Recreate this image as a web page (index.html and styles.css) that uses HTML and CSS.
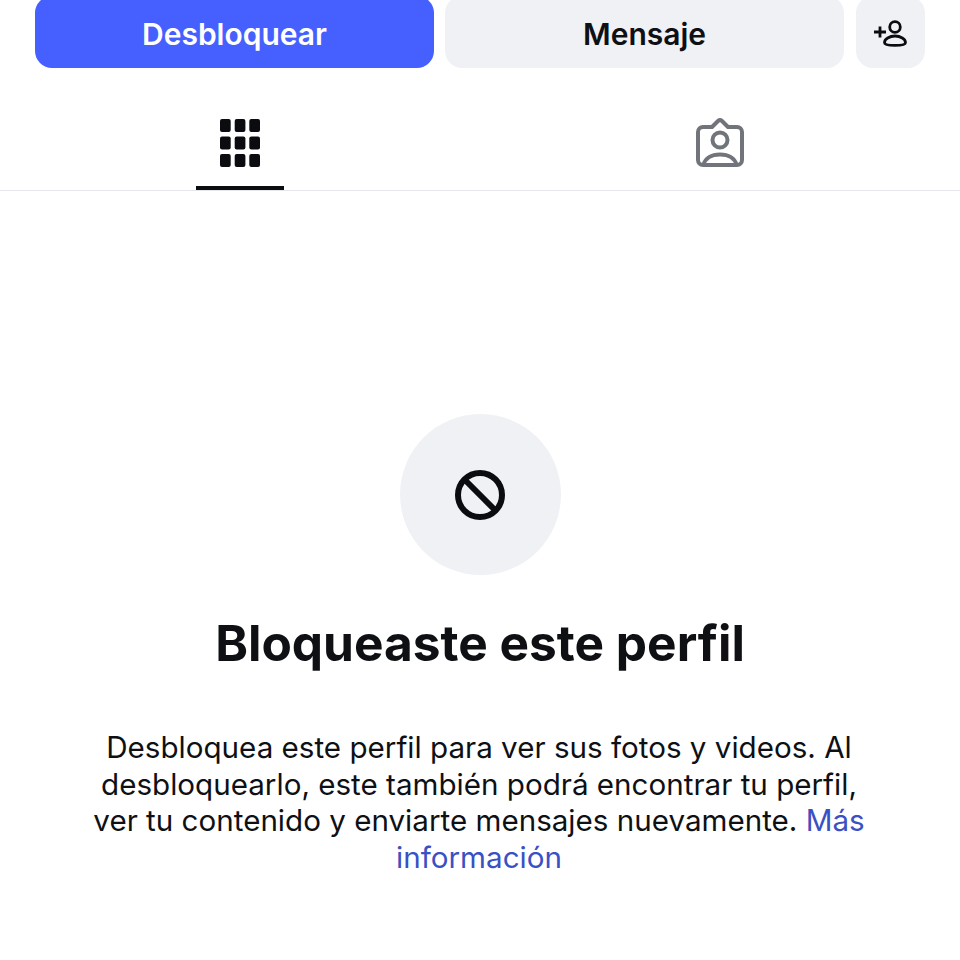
FILE: index.html
```html
<!DOCTYPE html>
<html>
<head>
	<meta charset="UTF-8">
	<title>Perfil bloqueado</title>
	<link rel="stylesheet" href="styles.css">
</head>
<body>
	<div class="actions">
		<button type="button" class="btn btn-primary">Desbloquear</button>
		<button type="button" class="btn btn-grey">Mensaje</button>
		<button type="button" class="btn btn-grey btn-icon">
			<svg width="34" height="28" viewBox="0 0 34 28" fill="none" stroke="#0b0c10" stroke-width="2.800">
				<path d="M0 12h12M6 6.500v11"/>
				<circle cx="21" cy="7" r="5.300"/>
				<path d="M10.500 22.500c0-3.500 5-6.500 10.500-6.500s10.500 3 10.500 6.500c0 2-4.500 2.900-10.500 2.900s-10.500-.9-10.500-2.900z"/>
			</svg>
		</button>
	</div>
	<div class="tabs">
		<div class="tab tab-active">
			<svg class="grid-icon" width="40" height="48" viewBox="0 0 40 48" fill="#0b0c10">
				<rect x="0" y="0" width="10.700" height="13" rx="2"/>
				<rect x="14.700" y="0" width="10.700" height="13" rx="2"/>
				<rect x="29.300" y="0" width="10.700" height="13" rx="2"/>
				<rect x="0" y="17.500" width="10.700" height="13" rx="2"/>
				<rect x="14.700" y="17.500" width="10.700" height="13" rx="2"/>
				<rect x="29.300" y="17.500" width="10.700" height="13" rx="2"/>
				<rect x="0" y="35" width="10.700" height="13" rx="2"/>
				<rect x="14.700" y="35" width="10.700" height="13" rx="2"/>
				<rect x="29.300" y="35" width="10.700" height="13" rx="2"/>
			</svg>
		</div>
		<div class="tab">
			<svg width="48" height="50" viewBox="0 0 48 50" fill="none" stroke="#71747b" stroke-width="4" stroke-linejoin="round">
				<path d="M7 9h9l6-6a3 3 0 0 1 4 0l6 6h9a5 5 0 0 1 5 5v28a5 5 0 0 1-5 5H7a5 5 0 0 1-5-5V14a5 5 0 0 1 5-5z"/>
				<circle cx="24" cy="22" r="7.500"/>
				<path d="M7.500 47c1.500-7 8-10.500 16.500-10.500s15 3.500 16.500 10.500"/>
			</svg>
		</div>
	</div>
	<div class="blocked">
		<div class="blocked-circle">
			<svg width="52" height="52" viewBox="0 0 52 52" fill="none" stroke="#0b0c10" stroke-width="6">
				<circle cx="26" cy="26" r="22"/>
				<path d="M10.500 10.500l31 31"/>
			</svg>
		</div>
		<h1>Bloqueaste este perfil</h1>
		<p>Desbloquea este perfil para ver sus fotos y videos. Al desbloquearlo, este también podrá encontrar tu perfil, ver tu contenido y enviarte mensajes nuevamente. <a href="#">Más información</a></p>
	</div>
</body>
</html>
```

FILE: styles.css
```css
body {
	margin: 0;
	background-color: #fff;
	font-family: "Inter", "Liberation Sans", sans-serif;
	color: #0e1014;
}

.actions {
	display: flex;
	gap: 11px;
	margin-top: -4px;
	padding: 0 35px;
}

.btn {
	height: 72px;
	flex: 1;
	border: none;
	border-radius: 17px;
	font-family: inherit;
	font-size: 30px;
	font-weight: 600;
	padding: 3px 0 0;
}

.btn-primary {
	background-color: #4560ff;
	color: #fff;
}

.btn-grey {
	background-color: #f0f1f5;
	color: #0e1014;
}

.btn-icon {
	flex: none;
	width: 69px;
	margin-left: 1px;
	display: flex;
	align-items: center;
	justify-content: center;
}

.tabs {
	display: flex;
	margin-top: 50px;
	border-bottom: 1px solid #e6e7ea;
}

.tab {
	flex: 1;
	height: 72px;
	display: flex;
	justify-content: center;
	position: relative;
}

.grid-icon {
	margin-top: 1px;
}

.tab-active::after {
	content: "";
	position: absolute;
	left: 196px;
	bottom: 0;
	width: 88px;
	height: 4px;
	background-color: #0b0c10;
}

.blocked {
	display: flex;
	flex-direction: column;
	align-items: center;
	padding-top: 223px;
}

.blocked-circle {
	width: 161px;
	height: 161px;
	border-radius: 50%;
	background-color: #f0f1f5;
	display: flex;
	align-items: center;
	justify-content: center;
}

h1 {
	margin: 39px 0 0;
	font-size: 49.600px;
	line-height: 58px;
	font-weight: 700;
}

p {
	margin: 57px 2px 0 0;
	width: 790px;
	text-align: center;
	font-size: 29.600px;
	line-height: 36.500px;
}

a {
	color: #3a50c4;
	text-decoration: none;
}
```
